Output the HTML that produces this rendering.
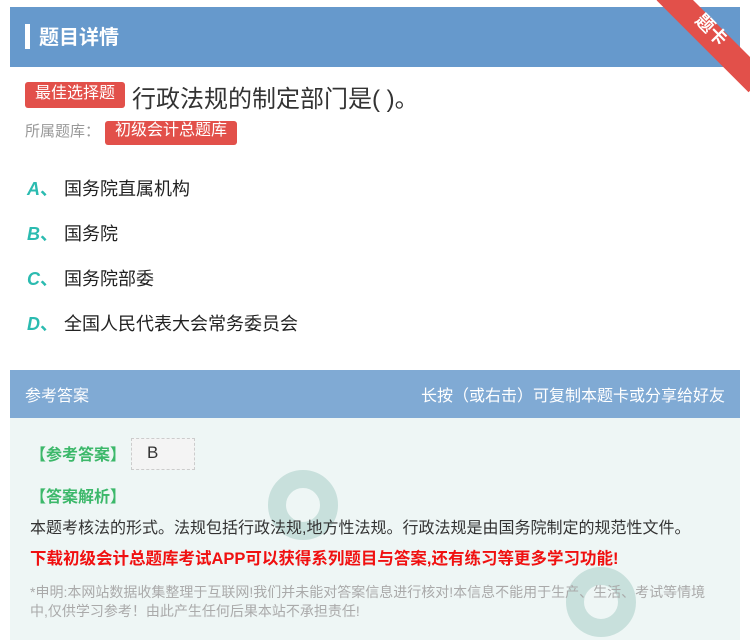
<!DOCTYPE html>
<html><head><meta charset="utf-8"><style>
*{margin:0;padding:0;box-sizing:border-box}
body{width:750px;height:640px;background:#fff;font-family:"Liberation Sans","Noto Sans CJK SC",sans-serif;position:relative;overflow:hidden}
.abs{position:absolute;white-space:nowrap}
.tag{position:absolute;background:#e2504a;color:#fff;border-radius:3px;text-align:center}
</style></head><body>
<div class="abs" style="left:10px;top:7px;width:730px;height:60px;background:#6699cc"></div>
<div class="abs" style="left:25px;top:24px;width:5px;height:25px;background:#fff"></div>
<div class="abs" style="left:39px;top:21px;font-size:20px;font-weight:bold;color:#fff">题目详情</div>
<div class="abs" style="left:675px;top:-18px;width:130px;height:26px;background:#e2504a;transform:rotate(45deg);transform-origin:0 0"></div>
<div class="abs" style="left:694px;top:16px;font-size:18px;color:#fff;transform:rotate(45deg);font-weight:bold">题卡</div>
<div class="tag" style="left:25px;top:82px;width:100px;height:26px;font-size:16px;line-height:24px">最佳选择题</div>
<div class="abs" style="left:132px;top:79px;font-size:24px;color:#333">行政法规的制定部门是( )。</div>
<div class="abs" style="left:25px;top:121px;font-size:15px;color:#999;line-height:22px">所属题库：</div>
<div class="tag" style="left:105px;top:121px;width:132px;height:24px;font-size:16px;line-height:20px">初级会计总题库</div>
<div class="abs" style="left:27px;top:175px;font-size:18px;color:#2bbbb0;font-weight:bold;font-style:italic">A<span style="font-style:normal">、</span></div>
<div class="abs" style="left:64px;top:175px;font-size:18px;color:#222">国务院直属机构</div>
<div class="abs" style="left:27px;top:220px;font-size:18px;color:#2bbbb0;font-weight:bold;font-style:italic">B<span style="font-style:normal">、</span></div>
<div class="abs" style="left:64px;top:220px;font-size:18px;color:#222">国务院</div>
<div class="abs" style="left:27px;top:265px;font-size:18px;color:#2bbbb0;font-weight:bold;font-style:italic">C<span style="font-style:normal">、</span></div>
<div class="abs" style="left:64px;top:265px;font-size:18px;color:#222">国务院部委</div>
<div class="abs" style="left:27px;top:310px;font-size:18px;color:#2bbbb0;font-weight:bold;font-style:italic">D<span style="font-style:normal">、</span></div>
<div class="abs" style="left:64px;top:310px;font-size:18px;color:#222">全国人民代表大会常务委员会</div>
<div class="abs" style="left:10px;top:370px;width:730px;height:48px;background:#80aad4"></div>
<div class="abs" style="left:10px;top:418px;width:730px;height:222px;background:#eef6f5"></div>
<div class="abs" style="left:25px;top:382px;font-size:16px;color:#fff">参考答案</div>
<div class="abs" style="right:25px;top:382px;font-size:16px;color:#fff">长按（或右击）可复制本题卡或分享给好友</div>
<div class="abs" style="left:268px;top:470px;width:70px;height:70px;border-radius:50%;border:18px solid #c8e0dc"></div>
<div class="abs" style="left:566px;top:567px;width:70px;height:70px;border-radius:50%;border:18px solid #c8e0dc"></div>
<div class="abs" style="left:30px;top:441px;font-size:16px;color:#3cb86a;font-weight:bold">【参考答案】</div>
<div class="abs" style="left:131px;top:438px;width:64px;height:32px;background:#f4f4f4;border:1px dashed #ccc;font-size:17px;color:#333;padding-left:15px;line-height:28px">B</div>
<div class="abs" style="left:30px;top:483px;font-size:16px;color:#3cb86a;font-weight:bold">【答案解析】</div>
<div class="abs" style="left:30px;top:514px;font-size:16px;color:#333">本题考核法的形式。法规包括行政法规,地方性法规。行政法规是由国务院制定的规范性文件。</div>
<div class="abs" style="left:30px;top:545px;font-size:16.5px;color:#f01010;font-weight:bold">下载初级会计总题库考试APP可以获得系列题目与答案,还有练习等更多学习功能!</div>
<div class="abs" style="left:30px;top:583px;font-size:14px;color:#aaa;line-height:19px;white-space:normal;width:690px">*申明:本网站数据收集整理于互联网!我们并未能对答案信息进行核对!本信息不能用于生产、生活、考试等情境中,仅供学习参考！由此产生任何后果本站不承担责任!</div>
</body></html>
